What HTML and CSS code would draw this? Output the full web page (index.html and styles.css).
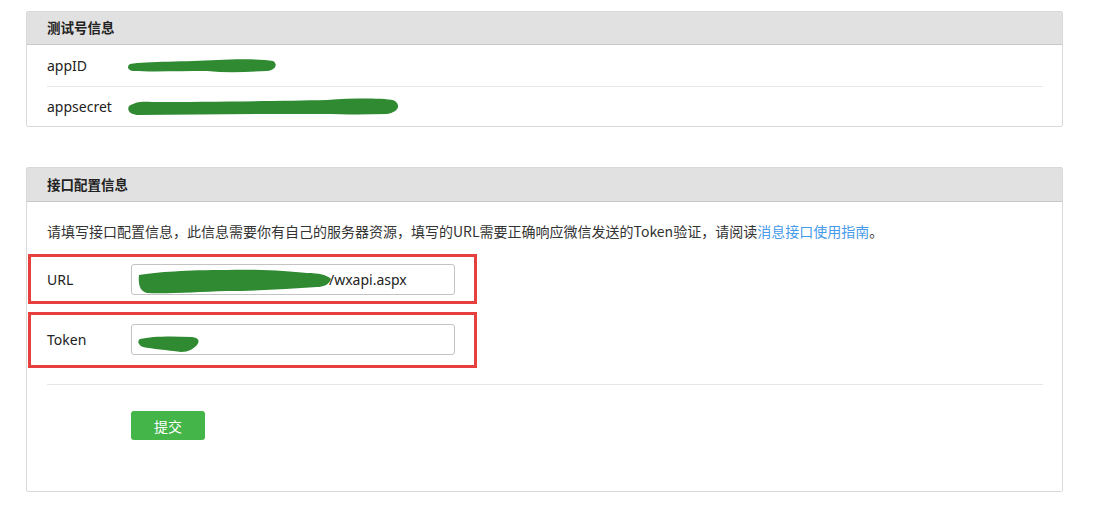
FILE: index.html
```html
<!DOCTYPE html>
<html lang="zh-CN">
<head>
<meta charset="utf-8">
<title>测试号</title>
<link rel="stylesheet" href="styles.css">
</head>
<body>
<div class="page">
  <section class="panel panel-info">
    <div class="panel-head">测试号信息</div>
    <div class="panel-body">
      <div class="info-row">
        <span class="label">appID</span>
        <svg class="scribble" width="152" height="16" viewBox="0 0 152 16"><path d="M3 6 C20 3 60 4 90 2 C110 1 135 1 146 3 C151 6 149 12 140 13 C120 14 100 15 80 13 C55 13 25 14 6 13 C0 12 0 8 3 6 Z" fill="#2f8a32"/></svg>
      </div>
      <div class="info-row">
        <span class="label">appsecret</span>
        <svg class="scribble" width="274" height="18" viewBox="0 0 274 18"><path d="M2 8 C8 4 14 3 25 4 C80 4 150 3 200 2 C230 0 262 0 268 3 C274 8 271 14 260 16 C230 17 200 16 160 16 C110 16 60 17 10 17 C2 16 0 12 2 8 Z" fill="#2f8a32"/></svg>
      </div>
    </div>
  </section>

  <section class="panel panel-config">
    <div class="panel-head">接口配置信息</div>
    <div class="panel-body">
      <p class="desc">请填写接口配置信息，此信息需要你有自己的服务器资源，填写的URL需要正确响应微信发送的Token验证，请阅读<a class="link" href="#">消息接口使用指南</a>。</p>
      <div class="form-row form-row-url">
        <span class="label">URL</span>
        <div class="field">
          <svg class="scribble" width="196" height="28" viewBox="0 0 196 28"><path d="M2 8 C20 5 50 3 90 3 C120 2 150 4 170 6 C182 6 190 8 194 12 C192 18 186 20 180 20 C150 22 120 24 90 24 C60 25 30 27 10 26 C3 24 1 18 2 8 Z" fill="#2f8a32"/></svg><span class="field-text">/wxapi.aspx</span>
        </div>
      </div>
      <div class="form-row form-row-token">
        <span class="label">Token</span>
        <div class="field">
          <svg class="scribble" width="64" height="20" viewBox="0 0 64 20"><path d="M3 6 C15 3 35 3 55 4 C62 5 63 8 60 12 C56 16 52 19 44 19 C30 17 15 16 6 14 C1 12 0 8 3 6 Z" fill="#2f8a32"/></svg>
        </div>
      </div>
      <div class="divider"></div>
      <div class="actions">
        <button class="btn" type="button">提交</button>
      </div>
    </div>
  </section>
</div>
</body>
</html>
```

FILE: styles.css
```css
* { box-sizing: border-box; }
html, body { margin: 0; padding: 0; background: #fff; }
body {
  font-family: "Noto Sans", "Noto Sans CJK SC", sans-serif;
  font-size: 14px;
  color: #222;
}
.page {
  padding: 11px 0 0 26px;
  width: 1063px;
}
.panel {
  border: 1px solid #d9d9d9;
  border-radius: 2px;
  background: #fff;
}
.panel + .panel { margin-top: 40px; }
.panel-head {
  height: 34px;
  line-height: 32px;
  padding-left: 20px;
  background: #e1e1e1;
  border-bottom: 1px solid #c8c8c8;
  font-weight: bold;
  font-size: 13.5px;
  color: #222;
  font-family: "Noto Sans CJK SC", sans-serif;
}
.panel-info .panel-head { height: 33px; line-height: 31px; }
.panel-info .panel-body { padding: 0 19px 0 20px; }
.info-row {
  display: flex;
  align-items: center;
  height: 41px;
}
.info-row + .info-row { border-top: 1px solid #e6e6e6; height: 40px; }
.label { width: 80px; flex: none; }
.scribble { display: block; flex: none; }

.panel-config .panel-body { padding: 18px 19px 51px 0; }
.desc {
  margin: 0 0 12px 20px;
  font-size: 14px;
  line-height: 22px;
  color: #333;
  font-family: "Noto Sans CJK SC", sans-serif;
}
.link { color: #459ae9; text-decoration: none; }
.form-row {
  display: flex;
  align-items: center;
  width: 449px;
  margin-left: 1px;
  border: 3px solid #e5403e;
  padding-left: 16px;
}
.form-row .label { width: 84px; }
.form-row-url { height: 50px; padding-top: 1px; }
.form-row-token { height: 56px; margin-top: 8px; padding-bottom: 2px; }
.field {
  width: 324px;
  height: 31px;
  border: 1px solid #c3c3c3;
  border-radius: 3px;
  display: flex;
  align-items: center;
  padding-left: 5px;
  overflow: hidden;
}
.form-row-url .field .scribble { margin-top: 2px; }
.form-row-token .field .scribble { margin-top: 8px; }
.field-text { font-size: 14px; color: #222; margin-left: -4px; }
.divider {
  margin: 16px 0 0 20px;
  border-top: 1px solid #e6e6e6;
}
.actions { padding: 26px 0 0 104px; }
.btn {
  display: block;
  width: 74px;
  height: 29px;
  border: none;
  border-radius: 3px;
  background: #44b549;
  color: #fff;
  font-size: 14px;
  font-family: "Noto Sans CJK SC", sans-serif;
  cursor: pointer;
  padding: 0;
}
```
